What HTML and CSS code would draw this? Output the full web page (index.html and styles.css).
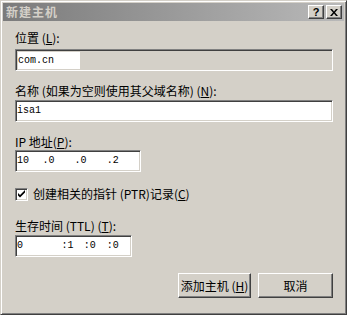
FILE: index.html
```html
<!DOCTYPE html>
<html lang="zh-CN">
<head>
	<meta charset="UTF-8">
	<title>新建主机</title>
	<link rel="stylesheet" href="styles.css">
</head>
<body>
	<div class="window">
		<div class="titlebar">
			<span class="title">新建主机</span>
			<div class="tb-buttons">
				<span class="tb-btn">?</span>
				<span class="tb-btn">
					<svg width="8" height="7" viewBox="0 0 8 7"><path d="M0 0h2l2 2.5L6 0h2L5 3.5 8 7H6L4 4.5 2 7H0l3-3.5z" fill="#000"/></svg>
				</span>
			</div>
		</div>
		<div class="content">
			<div class="label l1">位置 (<u>L</u>):</div>
			<div class="field wide readonly"><span class="sel mono">com.cn</span></div>

			<div class="label l2">名称 (如果为空则使用其父域名称) (<u>N</u>):</div>
			<div class="field wide"><span class="mono">isa1</span></div>

			<div class="label l3">IP 地址(<u>P</u>):</div>
			<div class="field ip mono">
				<span class="oct first">10</span><span class="oct">.0</span><span class="oct">.0</span><span class="oct">.2</span>
			</div>

			<div class="check">
				<span class="box">
					<svg width="9" height="9" viewBox="0 0 9 9"><path d="M1 3l2 2 5-5v2.5L3 7.5 1 5.5z" fill="#000"/></svg>
				</span>
				<span>创建相关的指针 (PTR)记录(<u>C</u>)</span>
			</div>

			<div class="label l4">生存时间 (TTL) (<u>T</u>):</div>
			<div class="field ttl mono">
				<span class="t0">0</span><span class="t1">:1</span><span class="t2">:0</span><span class="t2">:0</span>
			</div>

			<div class="buttons">
				<span class="btn">添加主机 (<u>H</u>)</span>
				<span class="btn">取消</span>
			</div>
		</div>
	</div>
</body>
</html>
```
FILE: styles.css
```css
*{margin:0;padding:0;box-sizing:border-box;}
body{background:#d4d0c8;font:12px/14px "Noto Sans CJK SC","Liberation Sans",sans-serif;color:#000;}
.window{width:347px;height:315px;background:#d4d0c8;border:1px solid;border-color:#d4d0c8 #404040 #404040 #d4d0c8;box-shadow:inset 1px 1px #fff,inset -1px -1px #808080;padding:2px;}
.titlebar{height:18px;display:flex;align-items:center;justify-content:space-between;background:linear-gradient(to right,#7b7b7b,#b9b9b9);padding:0 2px 0 3px;}
.title{color:#d4d0c8;font-weight:bold;font-size:12px;letter-spacing:1px;}
.tb-buttons{display:flex;gap:2px;}
.tb-btn{width:16px;height:14px;display:flex;align-items:center;justify-content:center;background:#d4d0c8;border:1px solid;border-color:#fff #404040 #404040 #fff;box-shadow:inset -1px -1px #808080;font:bold 11px/1 "Liberation Sans",sans-serif;}
.content{padding:0 11px 0 12px;}
.label{height:14px;white-space:nowrap;}
.l1{margin-top:10px;margin-bottom:4px;}
.l2{margin-top:13px;margin-bottom:2px;}
.l3{margin-top:13px;margin-bottom:1px;}
.l4{margin-top:18px;margin-bottom:2px;}
.field{height:22px;background:#fff;border:1px solid;border-color:#808080 #fff #fff #808080;box-shadow:inset 1px 1px #404040,inset -1px -1px #d4d0c8;display:flex;align-items:center;padding:0 1px;}
.wide{width:318px;}
.readonly{background:#d4d0c8;padding:2px 0 1px 2px;align-items:stretch;}
.sel{background:#fff;width:62px;display:flex;align-items:center;}
.mono{font-family:"Liberation Mono","Noto Sans CJK SC",monospace;font-size:10px;}
.ip{width:126px;}
.oct{width:33px;}
.oct.first{width:26px;}
.ttl{width:117px;}
.t0{width:46px;}
.t1{width:23px;}
.t2{width:24px;}
.check{display:flex;align-items:center;gap:5px;height:14px;margin-top:15px;}
.box{width:13px;height:13px;background:#fff;border:1px solid;border-color:#808080 #fff #fff #808080;box-shadow:inset 1px 1px #404040,inset -1px -1px #d4d0c8;display:flex;align-items:center;justify-content:center;}
.buttons{display:flex;justify-content:flex-end;gap:7px;margin-top:16px;}
.btn{width:75px;height:25px;display:flex;align-items:center;justify-content:center;background:#d4d0c8;border:1px solid;border-color:#fff #404040 #404040 #fff;box-shadow:inset -1px -1px #808080;}
.btn:first-child{width:73px;}
```
